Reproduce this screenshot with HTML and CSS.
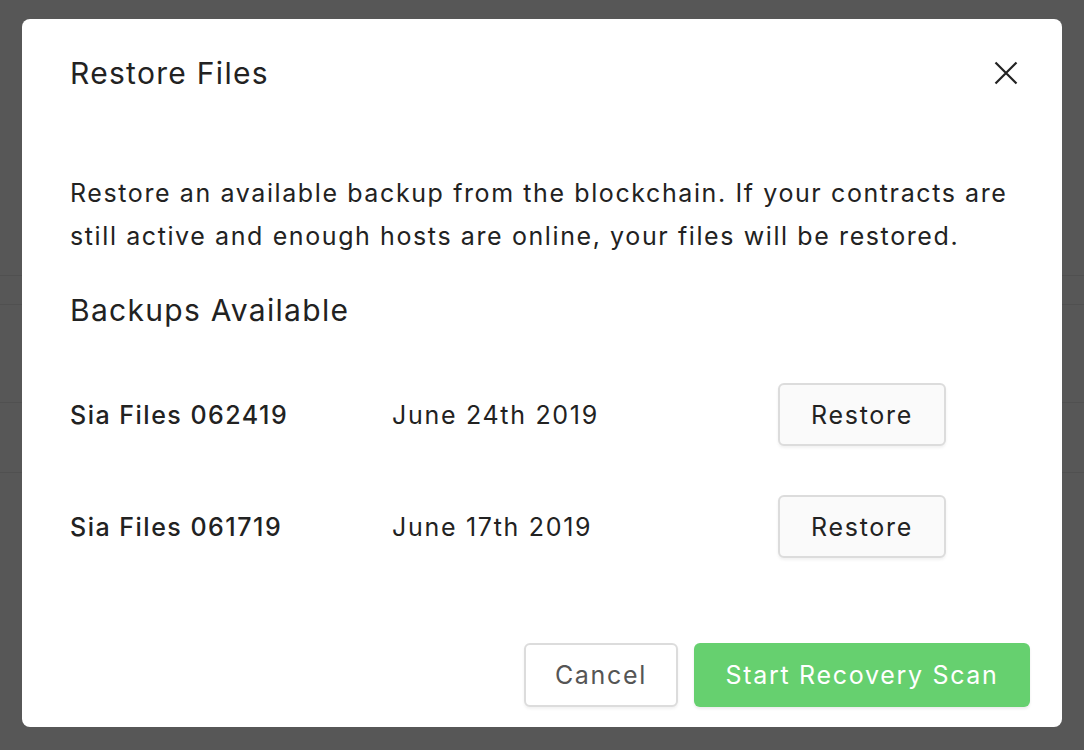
FILE: index.html
```html
<!DOCTYPE html>
<html>
<head>
<meta charset="utf-8">
<link rel="stylesheet" href="styles.css">
</head>
<body>
<div class="backdrop">
  <div class="bg-line l1"></div>
  <div class="bg-line l2"></div>
  <div class="bg-line l3"></div>
  <div class="bg-line l4"></div>
  <div class="modal">
    <div class="modal-header">
      <h1 class="title">Restore Files</h1>
      <button class="close" aria-label="Close">
        <svg width="24" height="24" viewBox="0 0 24 24"><path d="M1.5 1.5 L22.5 22.5 M22.5 1.5 L1.5 22.5" stroke="#222" stroke-width="2.2" fill="none"/></svg>
      </button>
    </div>
    <p class="desc">Restore an available backup from the blockchain. If your contracts are still active and enough hosts are online, your files will be restored.</p>
    <h2 class="subtitle">Backups Available</h2>
    <div class="backups">
      <div class="row">
        <div class="name">Sia Files 062419</div>
        <div class="date">June 24th 2019</div>
        <button class="btn restore">Restore</button>
      </div>
      <div class="row">
        <div class="name">Sia Files 061719</div>
        <div class="date">June 17th 2019</div>
        <button class="btn restore">Restore</button>
      </div>
    </div>
    <div class="footer">
      <button class="btn cancel">Cancel</button>
      <button class="btn primary">Start Recovery Scan</button>
    </div>
  </div>
</div>
</body>
</html>
```
FILE: styles.css
```css
html, body {
  margin: 0;
  padding: 0;
  width: 1084px;
  height: 750px;
  overflow: hidden;
}
body {
  font-family: "Inter", "Liberation Sans", sans-serif;
  color: #222;
}
.backdrop {
  position: relative;
  width: 1084px;
  height: 750px;
  background: #575757;
  padding: 19px 22px 0;
  box-sizing: border-box;
}
.bg-line {
  position: absolute;
  left: 0;
  right: 0;
  height: 1px;
  background: #505050;
}
.l1 { top: 275px; }
.l2 { top: 304px; }
.l3 { top: 402px; }
.l4 { top: 472px; }
.modal {
  position: relative;
  background: #fff;
  border-radius: 8px;
  height: 708px;
  box-sizing: border-box;
  padding: 0 32px 20px 48px;
  display: flex;
  flex-direction: column;
}
.modal-header {
  display: flex;
  justify-content: space-between;
  align-items: center;
  height: 108px;
}
.title {
  margin: 0;
  font-size: 30px;
  font-weight: 400;
  letter-spacing: 1.3px;
}
.close {
  border: 0;
  background: none;
  padding: 0;
  margin-right: 12px;
  width: 24px;
  height: 24px;
  display: flex;
}
.desc {
  margin: 45px 0 0;
  font-size: 25px;
  line-height: 43px;
  letter-spacing: 1.6px;
  max-width: 950px;
}
.subtitle {
  margin: 34px 0 0;
  font-size: 30px;
  font-weight: 400;
  letter-spacing: 1.3px;
}
.backups {
  margin-top: 55px;
  display: flex;
  flex-direction: column;
  gap: 49px;
}
.row {
  display: grid;
  grid-template-columns: 322px 386px 168px;
  align-items: center;
  font-size: 25px;
  letter-spacing: 1.7px;
}
.name {
  font-weight: 500;
  letter-spacing: 1.5px;
}
.btn {
  font-family: inherit;
  font-size: 25px;
  letter-spacing: 1.7px;
  color: #222;
  border-radius: 6px;
  cursor: pointer;
  padding: 0;
}
.restore {
  width: 168px;
  height: 63px;
  background: #fafafa;
  border: 2px solid #dcdcdc;
  box-shadow: 0 2px 3px rgba(0,0,0,0.06);
}
.footer {
  margin-top: auto;
  display: flex;
  justify-content: flex-end;
  gap: 16px;
}
.cancel {
  width: 154px;
  height: 64px;
  background: #fff;
  border: 2px solid #dcdcdc;
  color: #555;
  box-shadow: 0 2px 3px rgba(0,0,0,0.06);
}
.primary {
  width: 336px;
  height: 64px;
  background: #66d06f;
  border: 0;
  color: #fff;
  box-shadow: 0 2px 3px rgba(0,0,0,0.08);
}
```
